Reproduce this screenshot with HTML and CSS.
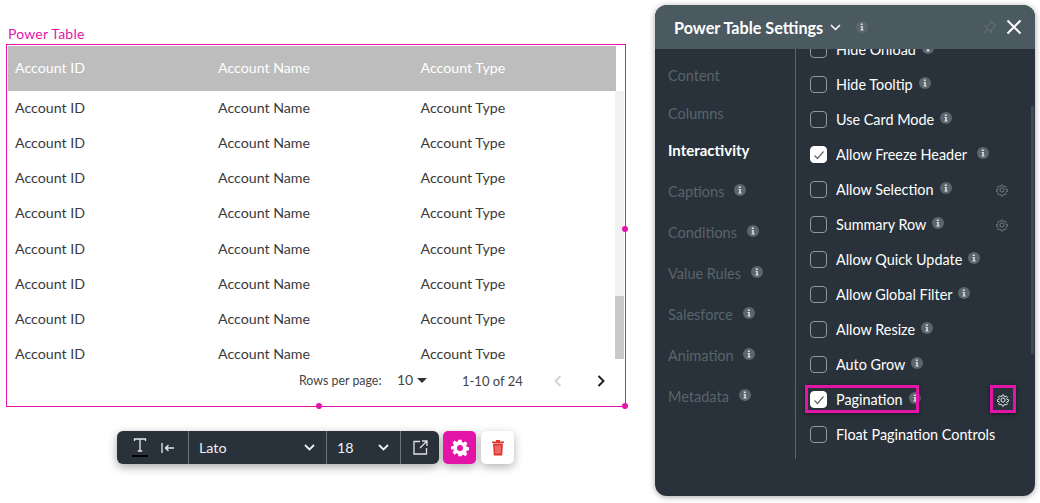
FILE: index.html
```html
<!DOCTYPE html>
<html lang="en">
<head>
<meta charset="utf-8">
<title>Power Table Settings</title>
<link rel="stylesheet" href="styles.css">
</head>
<body>
<svg class="defs" width="0" height="0" aria-hidden="true">
  <symbol id="info" viewBox="0 0 12 12">
    <circle cx="6" cy="6" r="6" fill="#5b666c"/>
    <path d="M4.8 2.4h2v1.5h-2zM4.6 5h2.2v3.6h.8v.9H4.4v-.9h.9V5.900h-.7z" fill="#dfe3e5"/>
  </symbol>
  <symbol id="gear" viewBox="0 0 24 24">
    <path fill="none" stroke="currentColor" stroke-width="1.700" stroke-linejoin="round" d="M10.300 2.500h3.400l.5 2.800 1.700.7 2.400-1.600 2.300 2.400-1.600 2.300.7 1.800 2.800.5v3.200l-2.800.5-.7 1.800 1.600 2.300-2.300 2.400-2.400-1.600-1.700.7-.5 2.800h-3.400l-.5-2.800-1.700-.7-2.400 1.600-2.300-2.400 1.600-2.300-.7-1.800-2.800-.5v-3.200l2.800-.5.7-1.800L3.400 6.600l2.300-2.400 2.400 1.600 1.700-.7z" transform="translate(1.200 1.200) scale(.9)"/>
    <circle cx="12" cy="12" r="3.600" fill="none" stroke="currentColor" stroke-width="1.700"/>
  </symbol>
</svg>

<main class="page">
  <section class="canvas">
    <div class="widget-label">Power Table</div>
    <div class="widget">
      <div class="table-head">
        <span>Account ID</span><span>Account Name</span><span>Account Type</span>
      </div>
      <div class="table-body">
        <div class="rows">
          <div class="row"><span>Account ID</span><span>Account Name</span><span>Account Type</span></div>
          <div class="row"><span>Account ID</span><span>Account Name</span><span>Account Type</span></div>
          <div class="row"><span>Account ID</span><span>Account Name</span><span>Account Type</span></div>
          <div class="row"><span>Account ID</span><span>Account Name</span><span>Account Type</span></div>
          <div class="row"><span>Account ID</span><span>Account Name</span><span>Account Type</span></div>
          <div class="row"><span>Account ID</span><span>Account Name</span><span>Account Type</span></div>
          <div class="row"><span>Account ID</span><span>Account Name</span><span>Account Type</span></div>
          <div class="row"><span>Account ID</span><span>Account Name</span><span>Account Type</span></div>
        </div>
        <div class="scrollbar"><div class="scroll-thumb"></div></div>
      </div>
      <div class="table-foot">
        <span class="rpp">Rows per page:</span>
        <span class="rpp-value">10</span>
        <svg class="rpp-caret" width="10" height="5" viewBox="0 0 10 5"><path d="M0 0h10L5 5z" fill="#333"/></svg>
        <span class="range">1-10 of 24</span>
        <svg class="page-prev" width="10" height="12" viewBox="0 0 10 12"><path d="M7.500 1 2.500 6l5 5" fill="none" stroke="#d4d4d4" stroke-width="2"/></svg>
        <svg class="page-next" width="10" height="12" viewBox="0 0 10 12"><path d="M2.500 1l5 5-5 5" fill="none" stroke="#222" stroke-width="2"/></svg>
      </div>
      <i class="handle handle-right"></i>
      <i class="handle handle-bottom"></i>
      <i class="handle handle-corner"></i>
    </div>

    <div class="toolbar-row">
      <div class="toolbar">
        <div class="tool-group tool-text">
          <span class="text-icon">
            <svg width="14" height="14" viewBox="0 0 14 14"><path d="M1.500 3V1h11v2M7 1v12M4.800 13h4.400" fill="none" stroke="#e8eaeb" stroke-width="1.300"/></svg>
            <i class="text-colour"></i>
          </span>
          <svg width="14" height="12" viewBox="0 0 14 12"><path d="M1 1v10M13 6H4.500M7.500 3 4.500 6l3 3" fill="none" stroke="#e8eaeb" stroke-width="1.300"/></svg>
        </div>
        <div class="tool-group tool-font">
          <span>Lato</span>
          <svg width="11" height="7" viewBox="0 0 11 7"><path d="m1 1 4.500 4.500L10 1" fill="none" stroke="#eef0f1" stroke-width="1.800"/></svg>
        </div>
        <div class="tool-group tool-size">
          <span>18</span>
          <svg width="11" height="7" viewBox="0 0 11 7"><path d="m1 1 4.500 4.500L10 1" fill="none" stroke="#eef0f1" stroke-width="1.800"/></svg>
        </div>
        <div class="tool-group tool-open">
          <svg width="15" height="15" viewBox="0 0 15 15"><path d="M7 1.500H1v12.500h12.500V8M9 1h5v5M14 1 7 8" fill="none" stroke="#dfe2e4" stroke-width="1.300"/></svg>
        </div>
      </div>
      <button class="square-btn gear-btn" type="button" aria-label="Settings">
        <svg width="18" height="18" viewBox="0 0 24 24"><path fill-rule="evenodd" fill="#fff" d="M10 1h4l.6 3.100 1.800.8 2.700-1.800 2.800 2.800-1.800 2.700.8 1.800 3.100.6v4l-3.100.6-.8 1.800 1.800 2.700-2.800 2.800-2.700-1.800-1.800.8L14 23h-4l-.6-3.100-1.800-.8-2.700 1.800-2.800-2.800 1.800-2.700-.8-1.800L0 14v-4l3.100-.6.800-1.800-1.800-2.700 2.800-2.800 2.700 1.800 1.800-.8zM12 8a4 4 0 1 0 0 8 4 4 0 0 0 0-8z"/></svg>
      </button>
      <button class="square-btn trash-btn" type="button" aria-label="Delete">
        <svg width="14" height="17" viewBox="0 0 14 17"><path d="M1 2.500h12v1.500H1zM5 1h4v1.500H5z" fill="#e5352f"/><path d="M2 4.500h10l-.8 12H2.800z" fill="#e5352f"/><path d="M5 6.500v8M7 6.500v8M9 6.500v8" stroke="#f6b3b0" stroke-width=".8"/></svg>
      </button>
    </div>
  </section>

  <aside class="panel">
    <header class="panel-head">
      <h1>Power Table Settings</h1>
      <svg class="head-chevron" width="11" height="7" viewBox="0 0 11 7"><path d="m1 1 4.500 4.500L10 1" fill="none" stroke="#fff" stroke-width="1.500"/></svg>
      <svg class="info head-info" width="12" height="12"><use href="#info"/></svg>
      <svg class="pin" width="15" height="15" viewBox="0 0 15 15"><path d="M9 1l5 5-1.500.5-3 3-.5 3L3 6l3-.5 3-3zM5.500 9.500 1.500 13.500" fill="none" stroke="#5f6c72" stroke-width="1.200"/></svg>
      <svg class="close" width="16" height="16" viewBox="0 0 16 16"><path d="M1.500 1.500l13 13M14.500 1.500l-13 13" fill="none" stroke="#fff" stroke-width="2"/></svg>
    </header>
    <div class="panel-body">
      <nav class="side-nav">
        <a class="nav-top">Content</a>
        <a class="nav-top">Columns</a>
        <a class="nav-top active">Interactivity</a>
        <a>Captions <svg class="info" width="12" height="12"><use href="#info"/></svg></a>
        <a>Conditions <svg class="info" width="12" height="12"><use href="#info"/></svg></a>
        <a>Value Rules <svg class="info" width="12" height="12"><use href="#info"/></svg></a>
        <a>Salesforce <svg class="info" width="12" height="12"><use href="#info"/></svg></a>
        <a>Animation <svg class="info" width="12" height="12"><use href="#info"/></svg></a>
        <a>Metadata <svg class="info" width="12" height="12"><use href="#info"/></svg></a>
      </nav>
      <div class="options">
        <ul class="option-list">
          <li class="option"><i class="check"></i><span>Hide Onload</span><svg class="info" width="12" height="12"><use href="#info"/></svg></li>
          <li class="option"><i class="check"></i><span>Hide Tooltip</span><svg class="info" width="12" height="12"><use href="#info"/></svg></li>
          <li class="option"><i class="check"></i><span>Use Card Mode</span><svg class="info" width="12" height="12"><use href="#info"/></svg></li>
          <li class="option"><i class="check on"><svg width="16" height="16" viewBox="0 0 16 16"><path d="m3.500 8.500 3 3 6-7" fill="none" stroke="#666" stroke-width="1.200"/></svg></i><span>Allow Freeze Header</span><svg class="info info-wide" width="12" height="12"><use href="#info"/></svg></li>
          <li class="option"><i class="check"></i><span>Allow Selection</span><svg class="info" width="12" height="12"><use href="#info"/></svg><svg class="gear dim" width="14" height="14"><use href="#gear"/></svg></li>
          <li class="option"><i class="check"></i><span>Summary Row</span><svg class="info" width="12" height="12"><use href="#info"/></svg><svg class="gear dim" width="14" height="14"><use href="#gear"/></svg></li>
          <li class="option"><i class="check"></i><span>Allow Quick Update</span><svg class="info" width="12" height="12"><use href="#info"/></svg></li>
          <li class="option"><i class="check"></i><span>Allow Global Filter</span><svg class="info" width="12" height="12"><use href="#info"/></svg></li>
          <li class="option"><i class="check"></i><span>Allow Resize</span><svg class="info" width="12" height="12"><use href="#info"/></svg></li>
          <li class="option"><i class="check"></i><span>Auto Grow</span><svg class="info" width="12" height="12"><use href="#info"/></svg></li>
          <li class="option"><i class="check on"><svg width="16" height="16" viewBox="0 0 16 16"><path d="m3.500 8.500 3 3 6-7" fill="none" stroke="#666" stroke-width="1.200"/></svg></i><span>Pagination</span><svg class="info" width="12" height="12"><use href="#info"/></svg><svg class="gear bright" width="14" height="14"><use href="#gear"/></svg>
            <i class="hl hl-row"></i><i class="hl hl-gear"></i></li>
          <li class="option"><i class="check"></i><span>Float Pagination Controls</span></li>
        </ul>
        <div class="panel-scroll"></div>
      </div>
    </div>
  </aside>
</main>
</body>
</html>
```

FILE: styles.css
```css
* { box-sizing: border-box; }
html, body { margin: 0; height: 100%; overflow: hidden; background: #fff; }
body { font-family: Lato, "Liberation Sans", sans-serif; color: #333; }
.defs { position: absolute; }

.page { display: flex; align-items: flex-start; height: 503px; }
.canvas { width: 655px; padding: 26px 0 0 6px; flex: none; }

.widget-label { color: #e514a8; font-size: 14px; line-height: 16px; margin: 0 0 2px 2px; letter-spacing: .2px; }
.widget { position: relative; width: 620px; height: 363px; border: 1px solid #e514a8; padding: 1px 9px 0 1px; display: flex; flex-direction: column; }

.table-head, .row { display: grid; grid-template-columns: 203px 202.500px 1fr; padding-left: 7px; align-items: center; font-size: 14.200px; }
.table-head { height: 45px; background: #bdbdbd; color: #fff; flex: none; padding-bottom: 2px; }
.table-body { flex: none; height: 268px; display: flex; margin-right: -8px; overflow: hidden; }
.rows { flex: 1; margin-top: -1px; }
.row { height: 35.140px; color: #3a3a3a; }
.scrollbar { width: 9px; background: #f1f1f1; display: flex; flex-direction: column; justify-content: flex-end; }
.scroll-thumb { height: 63px; background: #c9c9c9; }

.table-foot { flex: 1; display: flex; align-items: center; font-size: 12.400px; color: #444; padding-left: 291px; margin-bottom: 4px; }
.rpp { width: 98px; }
.rpp-value { font-size: 14px; width: 20px; margin-bottom: 2px; }
.rpp-caret { margin-right: 35px; }
.range { font-size: 13px; width: 91px; }
.page-prev { margin-right: 33px; }

.handle { position: absolute; width: 6px; height: 6px; border-radius: 50%; background: #e514a8; }
.handle-right { right: -3px; top: 181px; }
.handle-bottom { left: 309px; bottom: -3px; }
.handle-corner { right: -3px; bottom: -3px; }

.toolbar-row { display: flex; gap: 4px; margin: 24px 0 0 111px; }
.toolbar { display: flex; width: 322px; height: 33px; background: #29323a; border-radius: 6px; box-shadow: 0 3px 10px rgba(0,0,0,.35); color: #eef0f1; font-size: 14.300px; }
.tool-group { display: flex; align-items: center; border-left: 1px solid #6b7479; }
.tool-text { border-left: 0; width: 71px; padding-left: 16px; gap: 13px; }
.text-icon { position: relative; display: flex; flex-direction: column; gap: 3px; }
.text-colour { display: block; width: 16px; height: 2px; margin-left: -1px; background: #000; }
.tool-font { width: 138px; padding: 0 11px 0 10px; justify-content: space-between; }
.tool-size { width: 74px; padding: 0 11px 0 10px; justify-content: space-between; }
.tool-open { flex: 1; justify-content: center; }
.square-btn { width: 33px; height: 33px; border: 0; border-radius: 5px; display: flex; align-items: center; justify-content: center; padding: 0; box-shadow: 0 3px 10px rgba(0,0,0,.3); }
.gear-btn { background: #e514a8; }
.trash-btn { background: #fff; margin-left: 1px; }

.panel { width: 380px; height: 491px; margin: 5px 0 0 0; border-radius: 12px; overflow: hidden; background: #29323a; color: #fff; display: flex; flex-direction: column; flex: none; box-shadow: 0 1px 6px rgba(0,0,0,.35); }
.panel-head { height: 44px; background: #4b5960; display: flex; align-items: center; padding-left: 19px; flex: none; }
.panel-head h1 { font-size: 16.200px; font-weight: 700; margin: 0; }
.head-chevron { margin-left: 7px; }
.head-info { margin-left: 15px; }
.pin { margin-left: 114px; }
.close { margin-left: 9px; }

.panel-body { flex: 1; display: flex; min-height: 0; }
.side-nav { width: 141px; height: 410px; border-right: 1px solid #59646b; padding: 17px 0 0 13px; display: flex; flex-direction: column; flex: none; }
.side-nav a { height: 41px; font-size: 14.500px; color: #59646b; display: block; line-height: 20px; }
.side-nav a.nav-top { height: 37.500px; }
.side-nav a.active { color: #fff; font-weight: 700; font-size: 15px; height: 41px; margin-top: -1px; margin-bottom: 1px; }
.side-nav .info { margin-left: 6px; vertical-align: 1px; }

.options { flex: 1; position: relative; overflow: hidden; }
.option-list { list-style: none; margin: -17px 0 0 0; padding: 0 0 0 14px; }
.option { position: relative; height: 35px; display: flex; align-items: center; font-size: 14.400px; }
.option > span { margin-left: 9px; }
.option > .info { margin-left: 6px; margin-top: -3px; }
.option > .info-wide { margin-left: 10px; }
.check { width: 17px; height: 17px; border: 1px solid #8f989c; border-radius: 4px; display: block; flex: none; }
.check.on { background: #fff; border-color: #fff; }
.check svg { display: block; margin: 0; }
.gear { position: absolute; left: 186px; top: 11px; }
.gear.dim { color: #727c81; left: 185px; }
.gear.bright { color: #eef0f1; }
.hl { position: absolute; border: 3px solid #e514a8; box-shadow: 0 1px 4px rgba(0,0,0,.5); }
.hl-row { left: -5px; top: 3px; width: 114px; height: 28px; }
.hl-gear { left: 180px; top: 3px; width: 26px; height: 28px; }
.panel-scroll { position: absolute; right: 1px; top: 57px; width: 3px; height: 248px; background: #3f4a50; }
```
